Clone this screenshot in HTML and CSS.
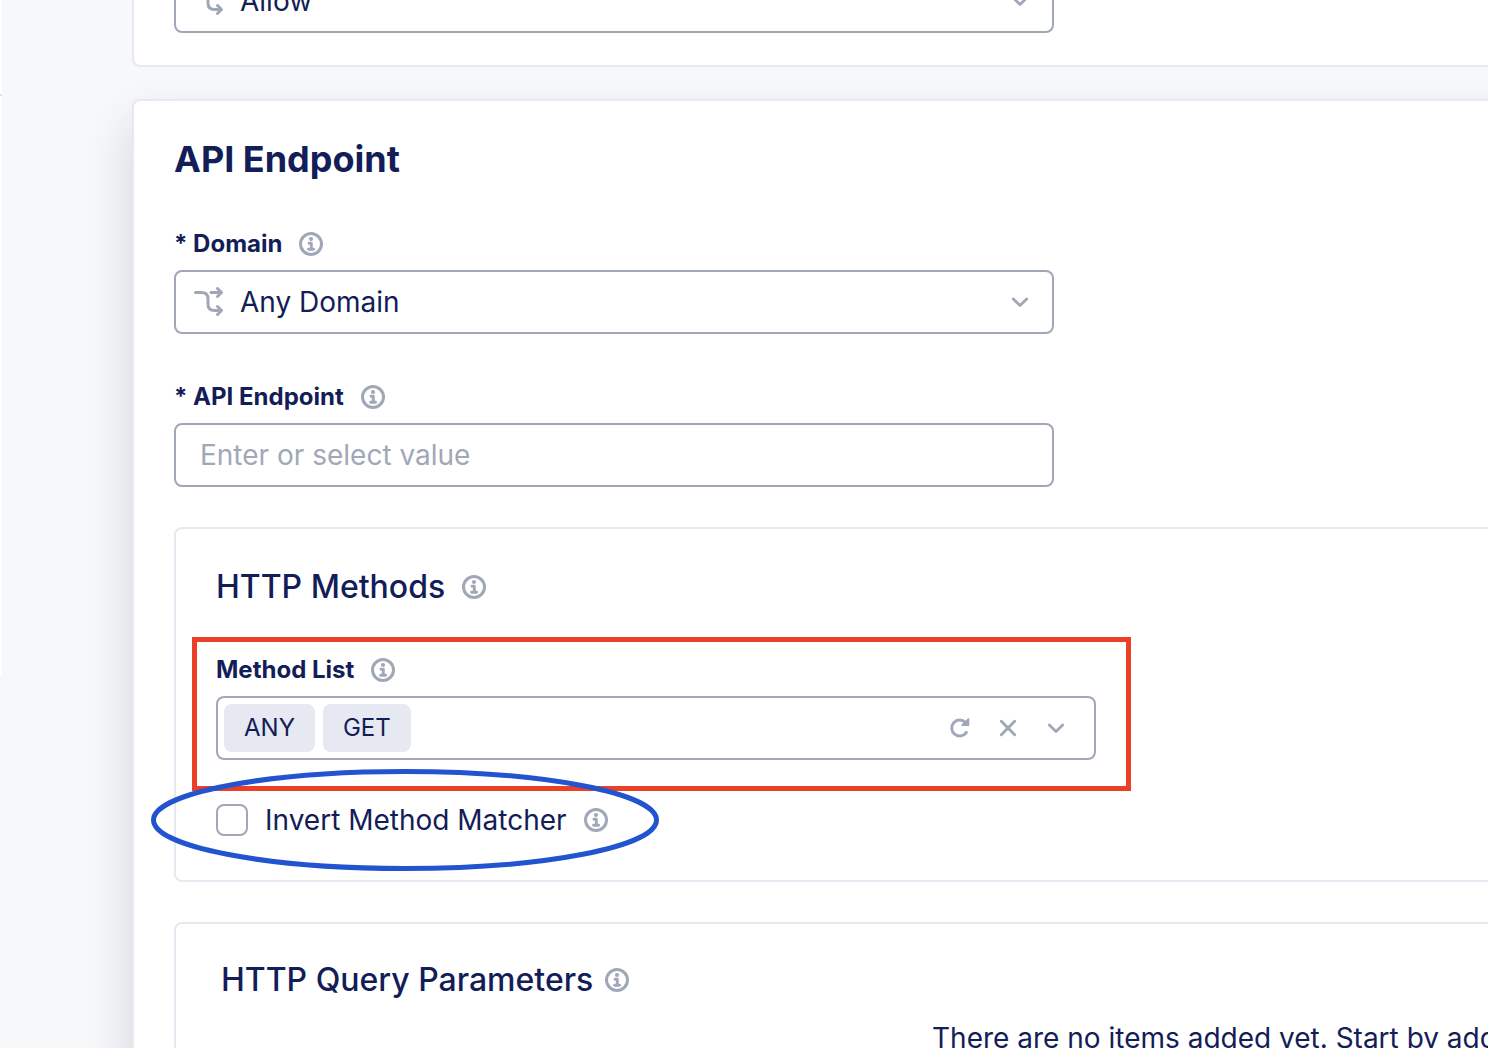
FILE: index.html
```html
<!DOCTYPE html>
<html lang="en">
<head>
  <meta charset="UTF-8" />
  <meta name="viewport" content="width=device-width,initial-scale=1.0"/>
  <title>API Endpoint</title>
  <link rel="stylesheet" href="styles.css">
</head>
<body>

<!-- Shared icons -->
<svg class="sprite" aria-hidden="true">
  <symbol id="icon-info" viewBox="0 0 24 24">
    <circle cx="12" cy="12" r="10.5" fill="none" stroke="currentColor" stroke-width="3"/>
    <circle cx="12" cy="7" r="2.1" fill="currentColor"/>
    <path d="M10 11.200h2.300v5.800M9.600 17.200h5" fill="none" stroke="currentColor" stroke-width="2.900" stroke-linecap="round" stroke-linejoin="round"/>
  </symbol>
  <symbol id="icon-branch" viewBox="0 0 30 30">
    <path d="M1.500 5.500h6c4.500 0 6.500 2 6.500 6.500v5c0 4.500 2 6.500 6.500 6.500h7M17 5.500h10.500M23.500 1.500l4 4-4 4M23.500 19.500l4 4-4 4" fill="none" stroke="currentColor" stroke-width="3" stroke-linecap="round" stroke-linejoin="round"/>
  </symbol>
  <symbol id="icon-chevron" viewBox="0 0 24 24">
    <path d="M5.300 9l6.700 6.500L18.700 9" fill="none" stroke="currentColor" stroke-width="2.800" stroke-linecap="round" stroke-linejoin="round"/>
  </symbol>
  <symbol id="icon-close" viewBox="0 0 24 24">
    <path d="M5.300 5.300l13.400 13.400M18.700 5.300L5.300 18.700" fill="none" stroke="currentColor" stroke-width="2.900" stroke-linecap="round"/>
  </symbol>
  <symbol id="icon-reload" viewBox="0 0 24 24">
    <path d="M18.400 16.400a8 8 0 1 1-1-10" fill="none" stroke="currentColor" stroke-width="2.900" stroke-linecap="round"/>
    <path d="M20 2.300c.8-.4 1.300 0 1.300.7v6.100c0 .6-.4 1-1 1h-6c-1 0-1.400-.9-.7-1.500z" fill="currentColor"/>
  </symbol>
</svg>

<div class="layout">
  <aside class="side">
    <div class="side-head"></div>
    <div class="side-body"></div>
  </aside>

  <main class="content">
    <section class="card card-action">
      <div class="select-box">
        <svg class="lead-icon"><use href="#icon-branch"/></svg>
        <select class="control" aria-label="Action">
          <option>Allow</option>
          <option>Deny</option>
        </select>
        <svg class="icon chevron"><use href="#icon-chevron"/></svg>
      </div>
    </section>

    <section class="card card-active">
      <h1>API Endpoint</h1>

      <div class="form-group">
        <div class="label-row">
          <label for="domain">* Domain</label>
          <svg class="icon"><use href="#icon-info"/></svg>
        </div>
        <div class="select-box">
          <svg class="lead-icon"><use href="#icon-branch"/></svg>
          <select class="control" id="domain">
            <option>Any Domain</option>
            <option>Specific Domain</option>
          </select>
          <svg class="icon chevron"><use href="#icon-chevron"/></svg>
        </div>
      </div>

      <div class="form-group">
        <div class="label-row">
          <label for="endpoint">* API Endpoint</label>
          <svg class="icon"><use href="#icon-info"/></svg>
        </div>
        <input type="text" class="control" id="endpoint" placeholder="Enter or select value" />
      </div>

      <section class="group">
        <div class="group-title">
          <h2>HTTP Methods</h2>
          <svg class="icon"><use href="#icon-info"/></svg>
        </div>

        <div class="form-group">
          <div class="label-row">
            <span class="label" id="methodLabel">Method List</span>
            <svg class="icon"><use href="#icon-info"/></svg>
          </div>
          <div class="control tag-box" role="group" aria-labelledby="methodLabel">
            <button type="button" class="tag">ANY</button>
            <button type="button" class="tag">GET</button>
            <div class="tag-actions">
              <button type="button" class="icon-btn" aria-label="Reset"><svg class="icon"><use href="#icon-reload"/></svg></button>
              <button type="button" class="icon-btn" aria-label="Clear"><svg class="icon"><use href="#icon-close"/></svg></button>
              <button type="button" class="icon-btn" aria-label="Open"><svg class="icon"><use href="#icon-chevron"/></svg></button>
            </div>
          </div>
        </div>

        <div class="check-row">
          <input type="checkbox" id="invert" />
          <label for="invert">Invert Method Matcher</label>
          <svg class="icon"><use href="#icon-info"/></svg>
        </div>

        <!-- Callouts drawn over the form -->
        <div class="mark mark-box"></div>
        <svg class="mark mark-oval" viewBox="0 0 508 102">
          <ellipse cx="254" cy="51" rx="251.500" ry="48.500" fill="none" stroke="currentColor" stroke-width="5"/>
        </svg>
      </section>

      <section class="group group-query">
        <div class="group-title">
          <h2>HTTP Query Parameters</h2>
          <svg class="icon"><use href="#icon-info"/></svg>
        </div>
        <p class="empty">There are no items added yet. Start by adding an item.</p>
      </section>
    </section>
  </main>
</div>

</body>
</html>
```
FILE: styles.css
```css
* {
  margin: 0;
  padding: 0;
  box-sizing: border-box;
}
body {
  font-family: Inter, "Liberation Sans", sans-serif;
  font-size: 28px;
  line-height: 36px;
  color: #131d57;
  background: #f7f8fa;
  height: 100vh;
  overflow: hidden;
}
input, select, button {
  font: inherit;
  color: inherit;
}
.sprite {
  display: none;
}
.layout {
  display: flex;
}

/* Edge of the side menu */
.side {
  width: 2px;
  flex: none;
}
.side-head {
  height: 96px;
  background: #fff;
  border-bottom: 2px solid #dcdeea;
}
.side-body {
  height: 579px;
  background: #fff;
  border-bottom-right-radius: 6px;
}

/* The form is scrolled down and runs past the right edge */
.content {
  flex: 1;
  min-width: 0;
  margin: -65px -962px 0 130px;
}
.card {
  background: #fff;
  border: 2px solid #e6e8f2;
  border-radius: 8px;
  padding: 32px 40px;
}
.card-action {
  position: relative;
  z-index: 1;
  margin-bottom: 32px;
}
.card-active {
  padding-top: 36px;
  box-shadow: 0 24px 48px rgba(30, 32, 60, 0.16);
}
h1 {
  font-size: 36px;
  line-height: 44px;
  font-weight: 700;
}
h2 {
  font-size: 32px;
  line-height: 40px;
  font-weight: 500;
}
.icon {
  display: block;
  flex: none;
  width: 24px;
  height: 24px;
  color: #a0a8b8;
  overflow: visible;
}

.form-group {
  margin-top: 48px;
}
.label-row {
  display: flex;
  align-items: center;
  gap: 17px;
  margin-bottom: 12px;
  font-size: 24px;
  line-height: 29px;
  font-weight: 700;
}
.control {
  display: block;
  width: 100%;
  max-width: 880px;
  height: 64px;
  padding: 0 24px;
  border: 2px solid #a0a8b8;
  border-radius: 8px;
  background: #fff;
}
.control::placeholder {
  color: #a0a8b8;
  opacity: 1;
}
.select-box {
  position: relative;
  max-width: 880px;
}
.select-box .control {
  appearance: none;
  padding: 0 64px;
}
.lead-icon {
  position: absolute;
  left: 20px;
  top: 17px;
  width: 30px;
  height: 30px;
  color: #a0a8b8;
}
.chevron {
  position: absolute;
  right: 22px;
  top: 20px;
}

.group {
  position: relative;
  margin-top: 40px;
  padding: 38px 40px 44px;
  border: 2px solid #e6e8f2;
  border-radius: 8px;
}
.group-title {
  display: flex;
  align-items: center;
  gap: 17px;
}
.group-query {
  padding: 36px 45px 44px;
}
.group-query .group-title {
  gap: 12px;
}

.tag-box {
  display: flex;
  align-items: center;
  gap: 8px;
  padding: 0 26px 0 6px;
}
.tag {
  height: 48px;
  padding: 0 20px;
  border: none;
  border-radius: 8px;
  background: #e6e8f2;
  font-size: 24px;
}
.tag-actions {
  display: flex;
  gap: 24px;
  margin-left: auto;
}
.icon-btn {
  border: none;
  background: none;
  cursor: pointer;
}

.check-row {
  display: flex;
  align-items: center;
  gap: 17px;
  height: 32px;
  margin-top: 44px;
}
.check-row input {
  appearance: none;
  width: 32px;
  height: 32px;
  border: 2px solid #a0a8b8;
  border-radius: 8px;
  background: #fff;
}
.check-row input:checked {
  background: #131d57;
}

.mark {
  position: absolute;
  pointer-events: none;
}
.mark-box {
  left: 16px;
  top: 108px;
  width: 939px;
  height: 154px;
  border: 5px solid #eb4025;
}
.mark-oval {
  left: -25px;
  top: 240px;
  width: 508px;
  height: 102px;
  color: #2354d0;
}

.empty {
  margin-top: 20px;
  text-align: center;
}
```
